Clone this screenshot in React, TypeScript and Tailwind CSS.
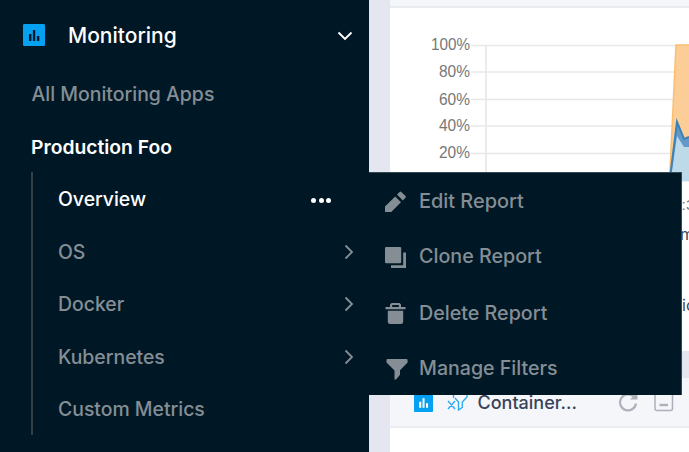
import React from "react";

const items = [
  { label: "Overview", active: true },
  { label: "OS", arrow: true },
  { label: "Docker", arrow: true },
  { label: "Kubernetes", arrow: true },
  { label: "Custom Metrics" },
];

const ticks = [
  { label: "100%", y: 45.5, base: 50.2, w: 39 },
  { label: "80%", y: 72, base: 76.8, w: 31 },
  { label: "60%", y: 99.5, base: 104.5, w: 31 },
  { label: "40%", y: 126, base: 130.8, w: 31 },
  { label: "20%", y: 153.5, base: 158.3, w: 31 },
];

function Bars({ size, hole }: { size: number; hole: string }) {
  return (
    <svg width={size} height={size} viewBox="0 0 22 22" className="shrink-0">
      <rect width="22" height="22" rx="1.2" fill="#05a0f0" />
      <path d="M6 10h2.400v7H6zM9.900 6h2.300v11H9.900zM13.900 12h2.400v5h-2.400z" fill={hole} />
    </svg>
  );
}

function Chevron() {
  return (
    <svg width="10" height="16" viewBox="0 0 10 16" fill="none" stroke="#858e95" strokeWidth="1.8">
      <path d="M1.500 1.500 8 8l-6.500 6.500" />
    </svg>
  );
}

function Chart() {
  return (
    <svg width="299" height="343" viewBox="390 8 299 343" className="block">
      <g stroke="#e8e8e8" strokeWidth="1.7">
        {ticks.map((t) => (
          <path key={t.label} d={`M471 ${t.y}H689`} />
        ))}
        <path d="M486 45V181M471 181H689" />
      </g>
      <g fontFamily="Liberation Sans, Arial, sans-serif" fontSize="15.8" fill="#777" textAnchor="end">
        {ticks.map((t) => (
          <text key={t.label} x="470" y={t.base} textLength={t.w} lengthAdjust="spacingAndGlyphs">{t.label}</text>
        ))}
      </g>
      <path d="M669.500 181 676 45h13v136z" fill="#fccd96" />
      <path d="M669.500 181 676 45h13" fill="none" stroke="#fdbe70" strokeWidth="1.5" />
      <path d="M670 178 677 122l7 17 5-2v44h-19z" fill="#6399ca" />
      <path d="M671 178 677 136l7 11h5v34h-18z" fill="#bddae9" />
      <path d="M670 178 677 122l7 17 5-2" fill="none" stroke="#3c82b5" strokeWidth="2" />
      <g fontFamily="Inter, sans-serif">
        <text x="673" y="210" fontSize="15.5" fill="#777" fontFamily="Liberation Sans, sans-serif">0:3</text>
        <text x="680" y="240" fontSize="16" fill="#39465b">m</text>
        <text x="682" y="311" fontSize="16" fill="#39465b">ic</text>
      </g>
    </svg>
  );
}

function Sidebar() {
  return (
    <aside className="w-[369px] shrink-0 bg-[#001825] text-[#858e95]">
      <div className="flex h-[70px] items-center pl-[23px] pr-4 text-white">
        <Bars size={22} hole="#001825" />
        <span className="ml-[23px] grow pt-[2px] text-[21px] font-medium leading-7">Monitoring</span>
        <svg width="16" height="10" viewBox="0 0 16 10" fill="none" stroke="white" strokeWidth="1.9" className="mt-px">
          <path d="M1.500 1.500 8 8l6.500-6.500" />
        </svg>
      </div>
      <div className="flex h-12 items-center pl-[31.500px] pt-[2px] text-[19.450px] font-medium">All Monitoring Apps</div>
      <div className="flex h-[54px] items-center pl-[31px] pt-[4px] text-[19.300px] font-semibold text-white">Production Foo</div>
      <nav className="ml-[31px] border-l-2 border-[#343f48]">
        {items.map((item) => (
          <div key={item.label} className={`flex h-[52.500px] items-center justify-between pl-[25px] pr-[15px] pt-[2px] text-[19.400px] font-medium ${item.active ? "text-white" : ""}`}>
            <span className={item.arrow ? "pt-px" : ""}>{item.label}</span>
            {item.arrow && <Chevron />}
            {item.active && (
              <span className="mr-[23px] mt-[3px] flex gap-[2.500px]">
                <i className="size-[5px] rounded-full bg-white" />
                <i className="size-[5px] rounded-full bg-white" />
                <i className="size-[5px] rounded-full bg-white" />
              </span>
            )}
          </div>
        ))}
      </nav>
    </aside>
  );
}

const actions = [
  {
    label: "Edit Report",
    style: "h-[57px] text-[19.900px]",
    icon: <path d="M0 17.500V21h6.200L16 11.200 10.200 5.400 0 15.500zM12 3.600l2.700-2.700q.8-.8 1.600 0l4.200 4.200q.8.8 0 1.600l-2.700 2.700z" />,
  },
  {
    label: "Clone Report",
    style: "h-[54px] text-[19.700px]",
    icon: <path d="M1.200 0H15q1.200 0 1.200 1.200V15q0 1.200-1.200 1.200H1.200Q0 16.200 0 15V1.200Q0 0 1.200 0zM18.200 5.500H21V21H6v-2.700h12.200z" />,
  },
  {
    label: "Delete Report",
    style: "h-[59px] text-[19.700px]",
    icon: <path fillRule="evenodd" d="M.5 4H5V1.500L6.500 0h8L16 1.500V4h4.500v2.200H.5zM7.200 2v2h6.600V2zM2.800 7.800h15.400v10.700q0 2.500-2.500 2.500H5.300q-2.500 0-2.500-2.500z" />,
  },
  {
    label: "Manage Filters",
    style: "h-[52px] text-[19.600px]",
    icon: <path d="M2.600 0h18.800q1.200 0 1.200 1.200v2.200L15 11.200v4.500L11 20.500H9.500v-9L1.500 3.600V1.200Q1.500 0 2.600 0z" />,
  },
];

export default function App() {
  return (
    <div className="relative flex h-[452px] w-[689px] overflow-hidden bg-white font-['Inter',sans-serif]">
      <Sidebar />
      <div className="w-[21px] shrink-0 bg-[#e4e7f0]" />
      <main className="flex w-[299px] shrink-0 flex-col">
        <div className="h-2 border-b-2 border-[#e8ecf1] bg-[#f4f6f9]" />
        <Chart />
        <div className="h-[27px] shrink-0 bg-[#e4e7f0]" />
        <div className="flex h-[50px] shrink-0 items-center border-b-2 border-[#ebedf2] bg-[#f4f6f9] pl-[23.500px]">
          <Bars size={19} hole="white" />
          <svg width="21" height="20" viewBox="0 0 21 20" className="ml-[14.500px]" fill="none" stroke="#29a8ef" strokeWidth="1.3">
            <path d="m1 9 7 8M8 9l-7 8M6.500 6V1.500H20V5l-4.700 5v5.500L11.500 18v-8L8 6" />
          </svg>
          <span className="ml-[9.500px] w-[140.500px] text-[18px] font-medium text-[#39435a]">Container...</span>
          <svg width="20" height="20" viewBox="0 0 20 20" fill="none">
            <path d="M18 11.500A8 8 0 1 1 15.500 4.500" stroke="#adb1bb" strokeWidth="2.2" />
            <path d="M19.500 0v7.500H12z" fill="#adb1bb" />
          </svg>
          <svg width="20" height="20" viewBox="0 0 20 20" className="ml-4" fill="none" stroke="#adb1bb">
            <rect x="1" y="1" width="17.500" height="17.500" rx="2" strokeWidth="1.5" />
            <path d="M5.500 13H14" strokeWidth="2.400" />
          </svg>
        </div>
      </main>
      <div className="absolute left-[369px] top-[172px] flex h-[223px] w-[313px] flex-col border-r border-t border-[#344851] bg-[#001825] font-medium text-[#858e95]">
        {actions.map((a) => (
          <div key={a.label} className={`flex shrink-0 items-center pl-4 ${a.style}`}>
            <svg width="23" height="21" viewBox="0 0 23 21" fill="#858e95">{a.icon}</svg>
            <span className="ml-[11px]">{a.label}</span>
          </div>
        ))}
      </div>
    </div>
  );
}
